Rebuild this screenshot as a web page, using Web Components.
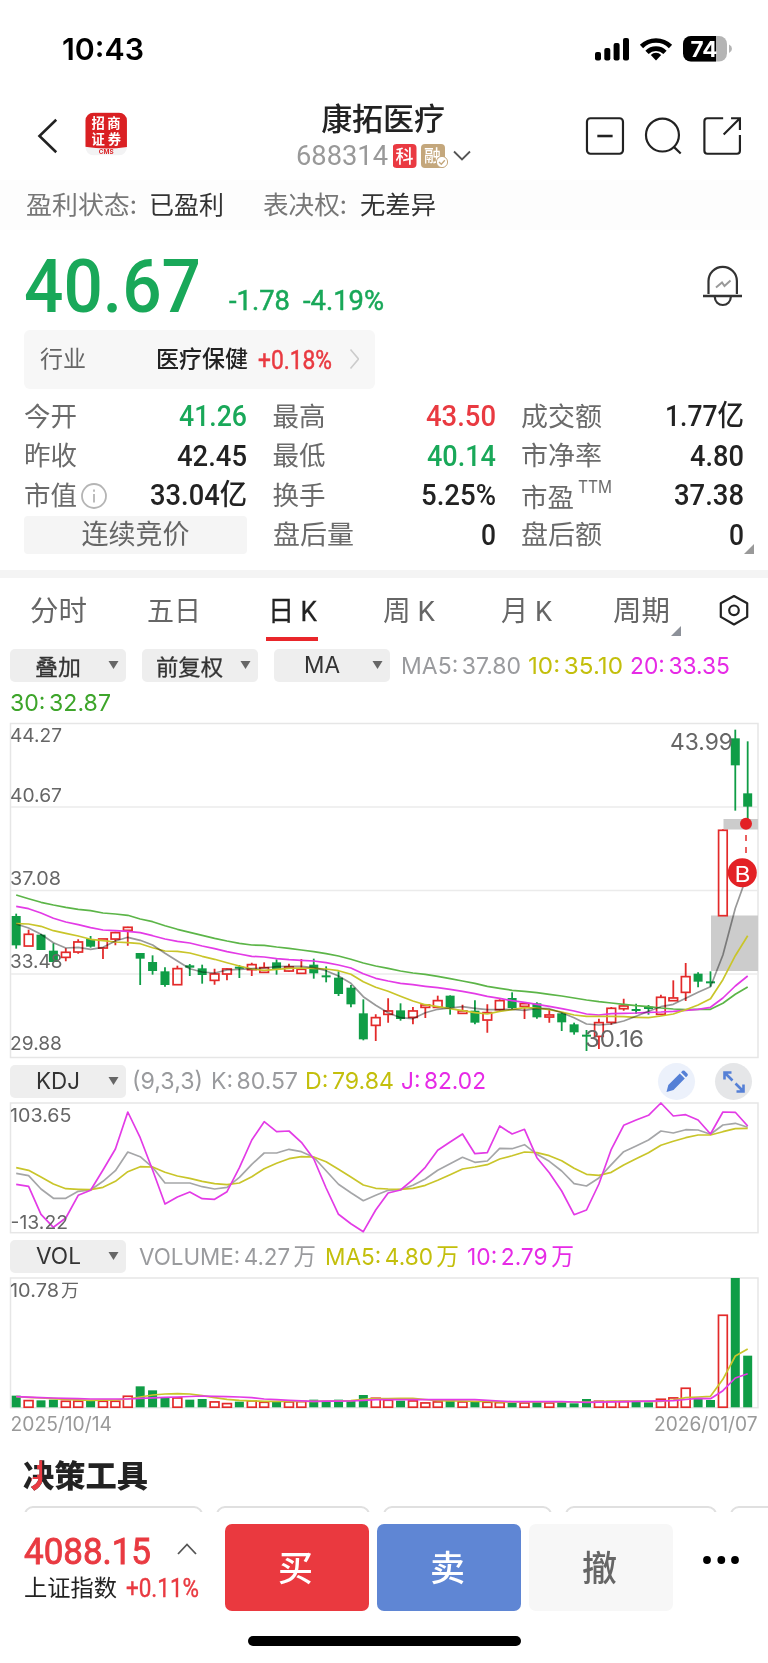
<!DOCTYPE html>
<html lang="zh-CN">
<head>
<meta charset="utf-8">
<title>康拓医疗 688314</title>
<style>
html,body{margin:0;padding:0;background:#fff}
body{width:768px;height:1663px;overflow:hidden;font-family:Roboto,"Noto Sans CJK SC",sans-serif;color:#222}
stock-app{display:block}
</style>
</head>
<body>
<stock-app></stock-app>
<script>
const make = (name, html, after) => customElements.define(name, class extends HTMLElement {
  constructor() {
    super();
    this.attachShadow({ mode: 'open' }).innerHTML = html;
    if (after) after.call(this, this.shadowRoot);
  }
});
const G = '#0f9d46', R = '#e32a2a', GREY = '#9a9b9e', YEL = '#c9c52a', MAG = '#e33be6', LG = '#5cb548';
const X = i => 16.2 + i * 12.398;

make('status-bar', `<style>
:host{display:flex;height:96px;align-items:center;padding:2px 36px 0 61.500px;box-sizing:border-box;color:#000}
x-t{font:600 30px Inter,sans-serif}
svg{margin-left:auto}</style>
<x-t w="82">10:43</x-t>
<svg width="140" height="28" viewBox="592 35 140 28">
<rect x="595" y="52" width="6" height="8.5" rx="2"/><rect x="604.3" y="48" width="6" height="12.5" rx="2"/><rect x="613.6" y="43" width="6" height="17.5" rx="2"/><rect x="623" y="38" width="6" height="22.5" rx="2"/>
<g fill="none" stroke="#000" stroke-width="4.6"><path d="M641.5 46.5a20.5 20.5 0 0 1 29 0"/><path d="M647 52.3a12.8 12.8 0 0 1 18 0"/></g><path d="M656 60.5l-5.2-5.6a7.4 7.4 0 0 1 10.400 0z"/>
<clipPath id="b"><rect x="683" y="36" width="44" height="25.500" rx="8"/></clipPath>
<g clip-path="url(#b)"><rect x="683" y="36" width="44" height="26" fill="#b4b4b4"/><rect x="683" y="36" width="33" height="26"/></g>
<path d="M729 44.500v8.500q3-1.500 3-4.250t-3-4.250z" fill="#b4b4b4"/>
<text x="690.500" y="56.500" fill="#fff" textLength="27" lengthAdjust="spacingAndGlyphs" style="font:700 21.500px Inter,sans-serif">74</text></svg>`);

make('app-header', `<style>
:host{display:flex;height:84px;box-sizing:border-box;padding:0 24px 0 36px;align-items:flex-start}
.back{margin-top:22px}.logo{margin:16px 0 0 25px}
.mid{margin-left:169px;width:176px;display:flex;flex-direction:column;align-items:center;padding-top:5px}
.t{font-weight:500;font-size:31px;color:#222}
.sub{display:flex;align-items:center;height:30px;margin-top:3px;gap:5px;width:176px}
.sub x-t{font-size:28px;color:#999;font-weight:400}
.icons{margin:20px 0 0 112px;display:flex}
</style>
<svg class="back" width="24" height="36" viewBox="36 118 24 36" fill="none" stroke="#222" stroke-width="2.600"><path d="M56.500 119.500L39.500 136l17 16.500"/></svg>
<svg class="logo" width="43" height="44" viewBox="85 112 43 44"><clipPath id="c"><rect x="85.500" y="112.500" width="42" height="43" rx="8"/></clipPath><g clip-path="url(#c)"><rect x="85" y="112" width="43" height="44" fill="#f3f3f4"/><path d="M85 112h43v35q-21 3.500-43 0z" fill="#da2023"/></g>
<g fill="#fff" style="font:700 13.500px Roboto,'Noto Sans CJK SC',sans-serif"><text x="91.500" y="127.700" textLength="29.500">招商</text><text x="91.500" y="143.700" textLength="30">证券</text></g><text x="99" y="154.300" fill="#da2023" textLength="15" lengthAdjust="spacingAndGlyphs" style="font:700 6.500px Inter,sans-serif">CMS</text></svg>
<div class="mid"><x-t class="t" w="124" dy="0" style="margin-left:-2px">康拓医疗</x-t>
<div class="sub"><x-t w="92" dy="0">688314</x-t>
<svg style="flex:none" width="84" height="26" viewBox="394 143 84 26"><rect x="393.500" y="144" width="24" height="24" rx="4" fill="#ea3a42"/><text x="396.500" y="162.500" fill="#fff" style="font:500 18px 'Noto Sans CJK SC',sans-serif">科</text>
<rect x="422" y="144" width="24" height="24" rx="4" fill="#c4a77c"/><text x="425" y="162" fill="#fff" style="font:500 17px 'Noto Sans CJK SC',sans-serif">融</text><circle cx="443" cy="162" r="5.600" fill="#fff" stroke="#c4a77c"/><path d="M440 162l2.300 2.200 3.500-4" fill="none" stroke="#c4a77c" stroke-width="1.300"/>
<path d="M455 151.500l8 8 8-8" fill="none" stroke="#555" stroke-width="1.800"/></svg></div></div>
<svg class="icons" width="162" height="42" viewBox="583 116 162 42" fill="none" stroke="#222" stroke-width="2.200"><rect x="586" y="118" width="36.500" height="36" rx="3.500"/><path d="M596.500 136h15.500" stroke-width="2.600"/>
<circle cx="662.500" cy="135" r="16.700"/><path d="M674 147l7 6.800"/>
<path d="M724 118h-16q-3 0-3 3v30q0 3 3 3h30q3 0 3-3v-16M732 118h9v12M741 118l-16.500 16.500"/></svg>`);

make('info-banner', `<style>
:host{display:flex;height:50px;align-items:center;padding:0 0 4px 26px;box-sizing:border-box;background:#fdfdfd;font-size:25px;color:#333;font-family:"Noto Sans CJK SC",sans-serif}
.g{color:#777}x-t+x-t{margin-left:12px}x-t.g2{margin-left:39px}</style>
<x-t class="g" w="111">盈利状态:</x-t><x-t w="75">已盈利</x-t><x-t class="g g2" w="84">表决权:</x-t><x-t w="76" style="margin-left:13px">无差异</x-t>`);

make('price-panel', `<style>
:host{display:block;padding:0 24px}
.p{display:flex;height:100px;color:#19a859;align-items:flex-start}
.big{font-size:74px;font-weight:500}.s{font-size:28.500px;font-weight:400;-webkit-text-stroke:.5px}
.bell{margin:34px 0 0 auto}
.ind{display:flex;align-items:center;width:351px;height:58.500px;border-radius:6px;background:#f7f7f7;box-sizing:border-box;padding:0 16px;font-size:23px}
</style>
<div class="p"><x-t class="big" w="177" dy="12.500">40.67</x-t><x-t class="s" w="61" dy="54" style="margin-left:28px">-1.78</x-t><x-t class="s" w="81" dy="54" style="margin-left:13px">-4.19%</x-t>
<svg class="bell" width="44" height="44" viewBox="700 264 44 44" fill="none" stroke="#333" stroke-width="2.200"><path d="M708.500 294v-13a14.200 14.200 0 0 1 28.400 0v13"/><path d="M703 296h39" stroke-width="2.400"/><path d="M714.800 297a8 8 0 0 0 16 0"/><path d="M716 287.500l6-5 2.500 3.500 6-5.500" stroke="#999" stroke-width="2"/></svg></div>
<div class="ind"><x-t w="46" dy="1" style="color:#666;margin-left:0">行业</x-t><x-t w="92" dy="1" style="margin-left:70px;font-weight:500">医疗保健</x-t><x-t w="74" dy=".5" style="margin-left:10px;font-size:25.500px;color:#e93a41;-webkit-text-stroke:.5px">+0.18%</x-t>
<svg width="12" height="22" style="margin-left:17px" fill="none" stroke="#ccc" stroke-width="1.600"><path d="M1.500 1.500l8 9.500-8 9.500"/></svg></div>`);

make('stat-cell', `<style>
:host{display:flex;height:39.500px;align-items:center;justify-content:space-between;color:#222}
::slotted([slot=k]){font-size:26.500px;color:#6b6b6b}
::slotted([slot=v]){font-size:29px;font-weight:500}
</style><slot name="k"></slot><slot name="v"></slot>`);

make('stat-grid', `<style>
:host{display:grid;grid-template-columns:223px 223px 223px;column-gap:25.500px;padding:8.500px 23px 15px 24px;position:relative}
.k{display:flex;align-items:center}
.btn{display:flex;align-items:center;justify-content:center;height:38.500px;background:#f5f5f5;border-radius:4px;font-size:27px;color:#666}
.u{color:#e93a41}.d{color:#19a859}
.tri{position:absolute;left:744px;top:155px}
</style>
<stat-cell><x-t slot="k" w="53">今开</x-t><x-t slot="v" class="d" w="68">41.26</x-t></stat-cell>
<stat-cell><x-t slot="k" w="53">最高</x-t><x-t slot="v" class="u" w="70">43.50</x-t></stat-cell>
<stat-cell><x-t slot="k" w="81">成交额</x-t><x-t slot="v" w="79">1.77亿</x-t></stat-cell>
<stat-cell><x-t slot="k" w="53">昨收</x-t><x-t slot="v" w="70">42.45</x-t></stat-cell>
<stat-cell><x-t slot="k" w="53">最低</x-t><x-t slot="v" class="d" w="69">40.14</x-t></stat-cell>
<stat-cell><x-t slot="k" w="81">市净率</x-t><x-t slot="v" w="54">4.80</x-t></stat-cell>
<stat-cell><div slot="k" class="k"><x-t w="53">市值</x-t><svg width="26" height="26" style="margin-left:4px" fill="none" stroke="#b5b5b5" stroke-width="1.800"><circle cx="13" cy="13" r="12"/><path d="M13 11v8.500M13 6.500v2.200"/></svg></div><x-t slot="v" w="97">33.04亿</x-t></stat-cell>
<stat-cell><x-t slot="k" w="53">换手</x-t><x-t slot="v" w="75">5.25%</x-t></stat-cell>
<stat-cell><div slot="k" class="k"><x-t w="53" dy="2">市盈</x-t><x-t w="34" dy="-9" style="font:400 17px Inter,sans-serif;margin-left:4px">TTM</x-t></div><x-t slot="v" w="70">37.38</x-t></stat-cell>
<div class="btn"><x-t w="108">连续竞价</x-t></div>
<stat-cell><x-t slot="k" w="81">盘后量</x-t><x-t slot="v" w="15">0</x-t></stat-cell>
<stat-cell><x-t slot="k" w="81">盘后额</x-t><x-t slot="v" w="15">0</x-t></stat-cell>
<svg class="tri" width="10" height="10"><path d="M10 0v10H0z" fill="#999"/></svg>`);

make('period-tabs', `<style>
:host{display:flex;height:71px;box-sizing:border-box;border-top:8px solid #f4f4f4;padding-left:30px;font-size:28px;color:#666}
.i{display:flex;align-items:center;height:67px;flex:none}
.on{color:#222;font-weight:400;-webkit-text-stroke:.3px;box-shadow:inset 0 -4px #e9262a;height:63px;padding:0 1px 0 2px}
svg{flex:none}
</style>
<div class="i"><x-t w="57">分时</x-t></div><div class="i" style="margin-left:60px"><x-t w="54">五日</x-t></div>
<div class="i on" style="margin-left:65px"><x-t w="49" dy="2">日 K</x-t></div><div class="i" style="margin-left:65px"><x-t w="52">周 K</x-t></div>
<div class="i" style="margin-left:66px"><x-t w="51">月 K</x-t></div><div class="i" style="margin-left:61px"><x-t w="57">周期</x-t></div>
<svg width="10" height="10" style="margin:48px 0 0 1px"><path d="M10 0v10H0z" fill="#8d9199"/></svg>
<svg width="30" height="34" viewBox="719 593 30 34" style="margin:15px 0 0 38px" fill="none" stroke="#222" stroke-width="2.200"><path d="M734 596l13.200 7.300v13.600L734 624.500l-13.200-7.600v-13.600z" stroke-linejoin="round"/><circle cx="734" cy="610.300" r="4.800"/></svg>`);

make('pick-chip', `<style>
:host{display:flex;width:116px;height:33px;flex:none;background:#eee;border-radius:5px;align-items:center;justify-content:center;box-sizing:border-box;padding:0 21px 1px 0;position:relative;color:#333;font:400 22px "Noto Sans CJK SC",sans-serif;-webkit-text-stroke:.3px}
:host([latin]){font:400 23px Inter,sans-serif;-webkit-text-stroke:0;padding:0 20px 0 0;word-spacing:0}
svg{position:absolute;right:7.500px;top:12px}</style><slot></slot><svg width="11" height="8"><path d="M.5 0h10L5.500 8z" fill="#666"/></svg>`);

make('indicator-row', `<style>:host{display:flex;align-items:center;padding-left:10px;height:33px;font:400 23.500px Inter,"Noto Sans CJK SC",sans-serif;color:${GREY};word-spacing:-3px}</style><slot></slot>`);

const svgText = (x, cy, w, s, t, fill = '#666') => `<text x="${x}" y="${cy + s * .364}" textLength="${w}" lengthAdjust="spacingAndGlyphs" fill="${fill}" style="font:400 ${s}px Inter,'Noto Sans CJK SC',sans-serif">${t}</text>`;
const line = (ys, c) => `<polyline fill="none" stroke="${c}" stroke-width="1.700" stroke-linejoin="round" points="${ys.map((y, i) => X(i).toFixed(1) + ',' + y.toFixed(1)).join(' ')}"/>`;
const frame = (t, b) => `<rect x="10.500" y="${t}" width="747.500" height="${b - t}" fill="none" stroke="#e6e6e6" stroke-width="1.500"/>`;
const joinSeg = (...segs) => segs.flatMap(([o, a]) => a.map(v => o + v / 3));

const candles = [
[880,[
'g',101,108,196,206,'r',149,162,199,199,'g',162,164,210,210,'g',190,212,246,246,'r',205,216,233,244,'r',178,185,217,221,'g',168,177,200,203,'r',176,176,205,237,'r',155,157,178,196,'r',140,141,152,197,
'g',219,219,236,315,'g',226,246,273,284,'g',262,274,315,320,'r',257,265,315,315,'g',252,256,263,288,'g',254,265,285,311,'r',266,281,302,314,'r',264,266,283,301,'g',255,260,266,294,'r',248,253,270,288]],
[900,[
'r',187,202,218,218,'g',178,187,208,224,'r',191,200,214,216,'r',177,207,221,221,'g',176,194,220,236,'g',199,226,232,247,'g',214,233,282,288,'g',255,263,313,322,'g',298,340,418,421,'r',343,352,377,423,
'r',295,332,344,368,'g',310,331,357,362,'r',321,332,353,373,'r',313,314,323,354,'r',287,301,323,323,'g',286,287,323,344,'r',314,332,341,342,'g',301,332,368,373,'r',313,337,361,398,'r',298,301,330,332,'g',277,294,324,330]],
[720,[
'r',847,850,860,897,'g',847,850,892,896,'r',868,884,892,908,'g',877,880,907,933,'g',908,913,937,944,'g',930,944,950,993,'r',896,907,950,987,'r',861,864,908,914,'r',836,857,867,872,'g',851,867,873,882,
'g',855,860,867,884,'r',824,831,884,886,'r',781,833,843,843,'r',729,769,818,843,'g',757,761,785,802,'g',754,784,790,800,'r',328,330,588,588,'g',29,55,136,272,'g',64,220,260,300]]
].flatMap(([o, a]) => { const r = []; for (let i = 0; i < a.length; i += 5) r.push([a[i], ...a.slice(i + 1, i + 5).map(v => o + v / 3)]); return r; });

const ma5 = joinSeg([880,[132,144,163,188,204,202,208,202,183,172,181,195,220,243,266,276,279,270,268,266]],[900,[204,200,199,199,203,212,228,250,290,316,338,353,356,338,328,324,320,325,329,329,328]],[720,[871,865,866,878,893,912,915,912,903,889,874,860,853,835,817,800,705,565,461]]);
const ma10 = joinSeg([880,[131,132,139,152,160,168,178,182,186,188,191,203,213,214,219,229,238,248,258,267]],[900,[211,208,205,204,205,207,212,223,245,262,274,289,303,314,320,326,332,338,342,334,329]],[720,[863,864,869,876,885,889,889,889,890,892,893,888,882,869,855,836,779,707,647]]);
const ma20 = joinSeg([880,[79,86,99,115,126,134,143,150,152,154,158,167,177,184,189,198,206,215,222,229]],[900,[171,176,179,181,183,188,195,204,221,235,243,250,254,259,263,268,274,281,289,295,302]],[720,[847,853,859,866,873,882,885,881,880,879,877,876,874,871,868,862,834,798,768]]);
const ma30 = joinSeg([880,[45,56,67,75,82,88,92,99,102,106,117,125,137,148,157,166,175,183,190,195]],[900,[136,141,145,150,155,161,168,178,189,198,205,213,219,223,229,236,243,250,259,265,271]],[720,[814,818,823,828,834,840,845,849,853,857,860,864,867,869,868,868,850,823,801]]);

make('k-chart', `<style>:host{display:block;height:338px}svg{display:block}</style><svg width="768" height="338" viewBox="0 722 768 338"></svg>`, function (root) {
  let s = frame(723.5, 1057.5) + [807, 890.5, 974].map(y => `<path d="M11 ${y}h747" stroke="#ebebeb" stroke-width="1.500"/>`).join('');
  s += '<path d="M723.500 819H758v10.500h-34.500zM711 915.500h47V971h-47z" fill="#ccc"/>';
  candles.forEach(([c, h, t, b, l], i) => {
    const x = X(i);
    if (c === 'g') s += `<path d="M${x} ${h}V${l}" stroke="${G}" stroke-width="1.800"/><rect x="${x - 4.5}" y="${t}" width="9" height="${b - t}" fill="${G}"/>`;
    else s += `<path d="M${x} ${h}V${t}M${x} ${b}V${l}" stroke="${R}" stroke-width="1.800"/><rect x="${x - 4.3}" y="${t + .3}" width="8.600" height="${b - t - .6}" fill="none" stroke="${R}" stroke-width="1.700"/>`;
  });
  s += line(ma30, LG) + line(ma20, MAG) + line(ma10, YEL) + line(ma5, '#999').replace('stroke-width', 'style="mix-blend-mode:multiply" stroke-width');
  s += svgText(10, 735.5, 52, 19, '44.27') + svgText(10, 795.5, 52, 19, '40.67') + svgText(10, 878, 51, 19, '37.08') + svgText(10, 961, 52.500, 19, '33.48') + svgText(10, 1043.5, 52, 19, '29.88');
  s += svgText(670, 742, 63, 23, '43.99') + svgText(585, 1038.7, 59, 23, '30.16');
  s += `<circle cx="746" cy="823.700" r="6" fill="#e32125"/><path d="M746 835v6M746 847v6" stroke="${R}" stroke-width="1.500"/><circle cx="742.300" cy="872.700" r="14.500" fill="#e32125"/>` + svgText(734.5, 873.7, 16, 22, 'B', '#fff');
  root.querySelector('svg').innerHTML = s;
});

const J = joinSeg([1060,[373,379,463,502,474,406,391,330,267,156,233,330,432,411,396,416,418,395,323,240,185,215,213,247,297,384,463,491,515,450,399,390,359,322,271,246,222,281,278,198,222,208,293,338,393,464,450,372,268,196,180,166,129,168,164,180,222,156,157,198]]);
const K = joinSeg([1060,[340,347,387,415,415,394,390,364,332,276,290,322,369,369,369,380,387,382,352,313,279,279,268,275,292,332,373,398,422,406,391,389,376,357,331,311,292,307,303,265,266,254,283,304,333,371,378,354,314,275,258,240,213,219,209,210,223,195,190,202]]);
const D = joinSeg([1060,[323,331,351,372,386,388,389,382,364,335,320,321,337,348,355,364,371,374,369,350,326,310,296,290,291,305,328,351,375,385,387,388,385,376,361,344,327,321,314,297,287,276,278,287,302,325,343,346,337,315,296,278,256,244,233,225,225,215,206,205]]);
make('kdj-chart', `<style>:host{display:block;height:134px}svg{display:block}</style><svg width="768" height="134" viewBox="0 1101 768 134"></svg>`, function (root) {
  root.querySelector('svg').innerHTML = frame(1103, 1232.7) + line(K, '#a5a6a8') + line(D, YEL) + line(J, MAG) + svgText(10, 1114.7, 61.500, 19, '103.65') + svgText(10.5, 1222, 57.500, 19, '-13.22');
});

const volTop = [437,450,451,449,452,452,453,452,452,437,409,421,442,442,449,447,454,459,455,451,455,455,454,453,449,454,449,451,435,443,449,452,451,457,454,449,454,454,455,456,458,457,456,457,456,460,447,452,453,453,455,457,446,442,413,446,450,194,84,317];
const keyed = o => { const ks = Object.keys(o).map(Number), r = []; for (let i = 0; i < 60; i++) { const b = ks.find(k => k >= i), a = ks.filter(k => k <= i).pop(); r.push(1250 + (a === b ? o[a] : o[a] + (o[b] - o[a]) * (i - a) / (b - a)) / 3); } return r; };
make('vol-chart', `<style>:host{display:block;height:160px}svg{display:block}</style><svg width="768" height="160" viewBox="0 1276 768 160"></svg>`, function (root) {
  let s = frame(1278, 1407.7);
  volTop.forEach((v, i) => {
    const x = X(i), t = 1250 + v / 3;
    s += candles[i][0] === 'g' ? `<rect x="${x - 4.5}" y="${t}" width="9" height="${1407.3 - t}" fill="${G}"/>` : `<rect x="${x - 4.4}" y="${t + .6}" width="8.800" height="${1406.6 - t}" fill="#fff" stroke="${R}" stroke-width="1.700"/>`;
  });
  s += line(keyed({0:440,4:448,6:451,8:450,9:447,10:441,11:435,12:432,13:431,14:432,15:437,16:443,17:448,18:451,20:454,24:454,27:452,28:448,29:446,32:445,34:452,36:453,40:456,46:456,48:453,52:454,53:450,54:443,56:439,57:388,58:318,59:297}), YEL);
  s += line(keyed({0:440,3:444,6:447,9:447,10:445,13:441,15:438,18:441,19:443,20:447,22:451,24:454,27:453,29:449,33:449,37:449,40:455,44:455,46:457,50:454,53:452,55:445,56:446,57:422,58:384,59:371}), MAG);
  s += svgText(10, 1290, 49, 19, '10.78') + svgText(61, 1290, 18, 18, '万') + svgText(10.5, 1424, 101.500, 19.500, '2025/10/14', '#999') + svgText(654, 1424, 103.500, 19.500, '2026/01/07', '#999');
  root.querySelector('svg').innerHTML = s;
});

make('tool-section', `<style>
:host{display:block;height:76px;overflow:hidden}
.h{display:flex;height:70px;align-items:center;padding:5px 0 0 23px;box-sizing:border-box;font:900 31px/1.200 "Noto Sans CJK SC",sans-serif}
x-t{color:transparent;--bg:linear-gradient(#e93a41,#e93a41) 14px 0/5px 25px no-repeat,linear-gradient(115deg,#e93a41 72%,transparent 72%) 8px 22px/11px 15px no-repeat,#222}
.c{display:flex;gap:13px;padding-left:24px}
.c i{flex:none;height:30px;box-sizing:border-box;border:2px solid #e0e0e0;border-radius:9px}
</style>
<div class="h"><x-t w="125">决策工具</x-t></div>
<div class="c"><i style="width:179px"></i><i style="width:154px"></i><i style="width:169px"></i><i style="width:152px"></i><i style="width:150px"></i></div>`);

make('trade-bar', `<style>
:host{display:block;background:#fff;height:152px;box-sizing:border-box;padding-top:12px}
.r{display:flex;height:86.500px;padding-left:24px}
.q{width:193px;margin-right:8px}
.a,.b{display:flex;align-items:center}
.a{height:52px;color:#e93a41;font-size:36.500px;font-weight:400;-webkit-text-stroke:.9px}.b{height:26px;font-size:23px}
.n{flex:none;width:144px;margin-right:8px;border-radius:7px;display:flex;align-items:center;justify-content:center;color:#fff;background:#ea393f;font:500 35px "Noto Sans CJK SC",sans-serif;box-sizing:border-box;padding:0 3px 3px 0}
.home{width:273px;height:10px;border-radius:5px;background:#000;margin:25px 0 0 247.500px}
</style>
<div class="r"><div class="q"><div class="a"><x-t w="127" dy="1.500">4088.15</x-t><svg width="20" height="12" style="margin:-2px 0 0 26px" fill="none" stroke="#555" stroke-width="1.800"><path d="M1 11l9-9.500 9 9.500"/></svg></div>
<div class="b"><x-t w="93">上证指数</x-t><x-t w="73" style="margin-left:9px;color:#e93a41;font-size:25px;-webkit-text-stroke:.4px">+0.11%</x-t></div></div>
<div class="n"><x-t w="35">买</x-t></div><div class="n" style="background:#5f86d4"><x-t w="35">卖</x-t></div><div class="n" style="background:#f7f7f7;color:#666"><x-t w="35">撤</x-t></div>
<svg width="40" height="12" style="margin:30px 0 0 18px;flex:none"><circle cx="8" cy="6" r="3.900"/><circle cx="22.300" cy="6" r="3.900"/><circle cx="36" cy="6" r="3.900"/></svg></div>
<div class="home"></div>`);

make('round-tool', `<style>:host{display:block;width:37px;height:37px;border-radius:50%;flex:none}::slotted(svg){display:block}</style><slot></slot>`);

make('stock-app', `<style>:host{display:block;width:768px;height:1663px;overflow:hidden;background:#fff}</style>
<status-bar></status-bar><app-header></app-header><info-banner></info-banner><price-panel></price-panel><stat-grid></stat-grid>
<period-tabs></period-tabs>
<indicator-row style="margin-top:8px"><pick-chip><x-t w="46">叠加</x-t></pick-chip><pick-chip style="margin-left:16px"><x-t w="67">前复权</x-t></pick-chip><pick-chip latin style="margin-left:16px"><x-t w="36">MA</x-t></pick-chip><x-t w="120" dy="1" style="margin-left:11px">MA5: 37.80</x-t><x-t w="95" dy="1" style="margin-left:7px;color:#c3bf0c">10: 35.10</x-t><x-t w="100" dy="1" style="margin-left:7px;color:#e62be6">20: 33.35</x-t></indicator-row>
<indicator-row style="height:40px"><x-t w="101" dy=".5" style="color:#3ea52b">30: 32.87</x-t></indicator-row>
<k-chart></k-chart>
<indicator-row style="margin-top:3px;height:37px"><pick-chip latin><x-t w="44">KDJ</x-t></pick-chip><x-t w="71" style="margin-left:6px">(9,3,3)</x-t><x-t w="87" style="margin-left:8px">K: 80.57</x-t><x-t w="89" style="margin-left:7px;color:#c3bf0c">D: 79.84</x-t><x-t w="85" style="margin-left:7px;color:#e62be6">J: 82.02</x-t>
<round-tool style="background:#ecf1fb;margin-left:172px"><svg width="37" height="37" fill="#5580d6"><path d="M8.500 29l1.800-7 11.500-11.500 5 5L15.500 27zM23 9.300l1.500-1.500q1-.8 2 0l3 3q.8 1 0 2L28 14.300z"/></svg></round-tool>
<round-tool style="background:#e5e6e8;margin-left:20px"><svg width="37" height="37" fill="none" stroke="#5580d6" stroke-width="2.600"><path d="M9.500 16.500v-7h7M9.500 9.500l8 8M28.500 21.500v7h-7M28.500 28.500l-8-8"/></svg></round-tool></indicator-row>
<kdj-chart style="margin-top:1px"></kdj-chart>
<indicator-row style="margin-top:5px"><pick-chip latin><x-t w="45">VOL</x-t></pick-chip><x-t w="177" dy=".5" style="margin-left:13px">VOLUME: 4.27 万</x-t><x-t w="134" dy=".5" style="margin-left:9px;color:#c3bf0c">MA5: 4.80 万</x-t><x-t w="107" dy=".5" style="margin-left:8px;color:#e62be6">10: 2.79 万</x-t></indicator-row>
<vol-chart style="margin-top:3px"></vol-chart>
<tool-section></tool-section><trade-bar></trade-bar>`);

/* Text that is fitted to a given advance width, with an optional baseline shift. */
customElements.define('x-t', class extends HTMLElement {
  constructor() {
    super();
    this.attachShadow({ mode: 'open' }).innerHTML = '<style>:host{display:inline-block;flex:none;line-height:1.2;white-space:nowrap}span{display:inline-block;transform-origin:0 50%;background:var(--bg,none);background-clip:text;-webkit-background-clip:text}</style><span><slot></slot></span>';
  }
  connectedCallback() {
    const s = this.shadowRoot.querySelector('span'), w = +this.getAttribute('w');
    const n = s.offsetWidth ? s.getBoundingClientRect().width : w;
    this.style.width = w + 'px';
    s.style.transform = `translateY(${this.getAttribute('dy') || 0}px) scaleX(${w / n})`;
  }
});
</script>
</body>
</html>
